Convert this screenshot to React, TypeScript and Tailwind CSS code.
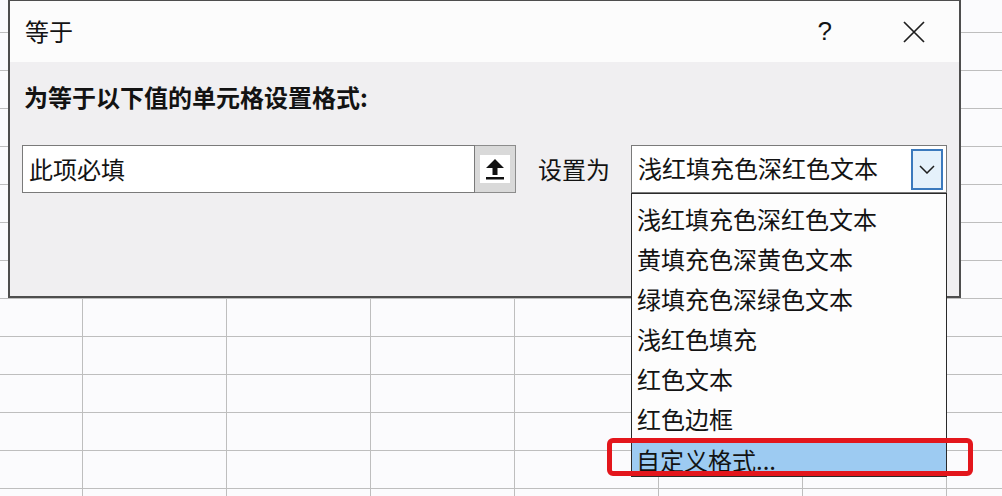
import React from "react";

const items = [
  "浅红填充色深红色文本",
  "黄填充色深黄色文本",
  "绿填充色深绿色文本",
  "浅红色填充",
  "红色文本",
  "红色边框",
  "自定义格式...",
];

export default function App() {
  const rows = Array.from({ length: 14 });
  const cols = Array.from({ length: 8 });
  return (
    <div className="relative w-[1002px] h-[496px] overflow-hidden bg-[#fbfbfd] text-[#131313] font-['Noto_Sans_CJK_SC','Noto_Sans',sans-serif]">
      {/* spreadsheet grid */}
      <div className="grid grid-cols-[83px_repeat(7,144px)] grid-rows-[33px_repeat(13,38px)]">
        {rows.map((_, r) =>
          cols.map((_, c) => (
            <div key={`${r}-${c}`} className="border-r border-b border-[#bebebe]" />
          ))
        )}
      </div>

      {/* dialog */}
      <div className="absolute left-[8px] top-0 w-[953px] h-[298px] border-2 border-t border-[#4e4e4e] flex flex-col">
        <div className="h-[61px] bg-[#fcfcfc] flex items-center pl-[15px] pr-[34px] pb-[2px]">
          <div className="flex-1 text-[24px] leading-[32px]">等于</div>
          <div className="text-[26px] leading-[32px] font-['Liberation_Sans',sans-serif] mr-[71px]">?</div>
          <svg width="22" height="22" viewBox="0 0 22 22" className="mt-[2px]">
            <path d="M1 1 L21 21 M21 1 L1 21" stroke="#1e1e1e" strokeWidth="1.7" fill="none" />
          </svg>
        </div>
        <div className="flex-1 bg-[#f0eff1] px-[12px] pt-[19px]">
          <div className="ml-[2px] text-[24px] leading-[32px] font-bold">为等于以下值的单元格设置格式:</div>
          <div className="mt-[32px] flex items-center h-[48px]">
            <div className="w-[453px] h-full border border-[#7a7a7a] bg-white pl-[6px] flex items-center text-[24px] leading-[32px]">
              此项必填
            </div>
            <div className="w-[41px] h-full bg-[#d9d9d9] border border-l-0 border-[#8c8c8c] flex items-center justify-center">
              <div className="w-[30px] h-[28px] bg-white flex items-center justify-center">
                <svg width="18" height="21" viewBox="0 0 18 21">
                  <path d="M9 0 L0 9 L6.5 9 L6.5 16 L11.5 16 L11.5 9 L18 9 Z" fill="#111" />
                  <rect x="0" y="18" width="18" height="2.5" fill="#111" />
                </svg>
              </div>
            </div>
            <div className="ml-[22px] text-[24px] leading-[32px]">设置为</div>
            <div className="ml-[21px] w-[316px] h-full border border-[#7a7a7a] bg-white flex items-center pl-[6px] pr-[3px]">
              <div className="flex-1 text-[24px] leading-[32px] -mt-[3px]">浅红填充色深红色文本</div>
              <div className="w-[32px] h-[41px] border-2 border-[#3b79bd] bg-[#e5f1fb] flex items-center justify-center">
                <svg width="16" height="9" viewBox="0 0 16 9">
                  <path d="M1 1 L8 8 L15 1" stroke="#1e1e1e" strokeWidth="1.5" fill="none" />
                </svg>
              </div>
            </div>
          </div>
        </div>
      </div>

      {/* dropdown list */}
      <div className="absolute left-[631px] top-[193px] w-[316px] h-[284px] border border-[#2a2a2a] bg-[#fdfdfd] pt-[5px] overflow-hidden">
        {items.map((t, i) => (
          <div
            key={t}
            className={
              i === items.length - 1
                ? "h-[40px] flex items-center pl-[4px] text-[24px] leading-[32px] bg-[#9dcbf2] border-t border-dotted border-[#555]"
                : "h-[40px] flex items-center pl-[5px] text-[24px] leading-[32px]"
            }
          >
            {t}
          </div>
        ))}
      </div>

      {/* red annotation */}
      <div className="absolute left-[607px] top-[438px] w-[366px] h-[38px] border-[5px] border-[#e3161c] rounded-[6px]" />
    </div>
  );
}
